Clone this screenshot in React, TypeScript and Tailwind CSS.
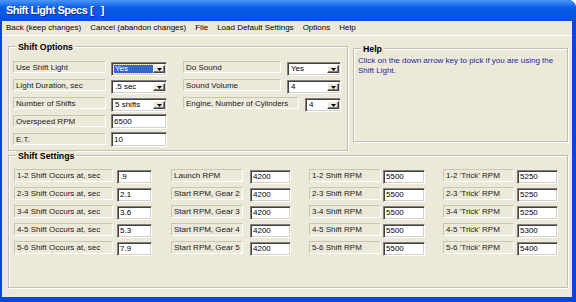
import React from 'react';

const sunken =
  'bg-white border border-[#808080] border-r-white border-b-white shadow-[inset_1px_1px_0_#404040,inset_-1px_-1px_0_#d4d0c8]';
const labelBox =
  'border border-[#c9c6b6] border-r-white border-b-white pl-[2px] leading-[11px] text-[#1a1a1a] whitespace-nowrap overflow-hidden';

function Label({ text, className }: { text: string; className: string }) {
  return <div className={`${labelBox} ${className}`}>{text}</div>;
}

function Input({ value, className }: { value: string; className: string }) {
  return (
    <div className={`${sunken} ${className} pl-[2px] flex items-center text-black`}>
      {value}
    </div>
  );
}

function Combo({
  value,
  className,
  selected = false,
}: {
  value: string;
  className: string;
  selected?: boolean;
}) {
  return (
    <div className={`${sunken} ${className} flex items-stretch p-[2px] pr-[1px]`}>
      <div className="flex-1 flex items-stretch">
        {selected ? (
          <span className="flex-1 flex items-center pl-[1px] bg-[#316ac5] text-white outline outline-1 outline-dotted outline-[#f0c060]">
            {value}
          </span>
        ) : (
          <span className="flex-1 flex items-center pl-[1px] text-black">{value}</span>
        )}
      </div>
      <div className="w-[12px] bg-[#ece9d8] border border-white border-r-[#404040] border-b-[#404040] shadow-[inset_-1px_-1px_0_#808080] flex items-center justify-center">
        <svg width="5" height="3" viewBox="0 0 5 3">
          <path d="M0 0h5L2.5 3z" fill="#000" />
        </svg>
      </div>
    </div>
  );
}

function Group({
  title,
  className,
  children,
}: {
  title: string;
  className: string;
  children: React.ReactNode;
}) {
  return (
    <div
      className={`relative border border-[#c2bfb0] shadow-[inset_1px_1px_0_#fff,1px_1px_0_#fff] ${className}`}
    >
      <span className="absolute left-[7px] top-[-5px] bg-[#ece9d8] px-[2px] font-bold text-[8.75px] leading-[11px] text-black">
        {title}
      </span>
      {children}
    </div>
  );
}

const shiftRows = [
  ['1-2 Shift Occurs at, sec', '.9', 'Launch RPM', '4200', '1-2 Shift RPM', '5500', "1-2 'Trick' RPM", '5250'],
  ['2-3 Shift Occurs at, sec', '2.1', 'Start RPM, Gear 2', '4200', '2-3 Shift RPM', '5500', "2-3 'Trick' RPM", '5250'],
  ['3-4 Shift Occurs at, sec', '3.6', 'Start RPM, Gear 3', '4200', '3-4 Shift RPM', '5500', "3-4 'Trick' RPM", '5250'],
  ['4-5 Shift Occurs at, sec', '5.3', 'Start RPM, Gear 4', '4200', '4-5 Shift RPM', '5500', "4-5 'Trick' RPM", '5300'],
  ['5-6 Shift Occurs at, sec', '7.9', 'Start RPM, Gear 5', '4200', '5-6 Shift RPM', '5500', "5-6 'Trick' RPM", '5400'],
];

export default function App() {
  return (
    <div className="w-[576px] h-[302px] bg-white font-['Liberation_Sans',Arial,sans-serif] text-[8px]">
      <div className="w-full h-full flex flex-col bg-[#0b47d6] rounded-tr-[8px] overflow-hidden">
        {/* title bar */}
        <div className="h-[21px] shrink-0 flex items-center pl-[6px] bg-linear-to-b from-[#4a96f8] via-[#0b5ee8] via-35% to-[#0652dc]">
          <span className="text-white font-bold text-[11px] tracking-[-0.5px] whitespace-pre [text-shadow:1px_1px_0_#0a2f9a]">
            Shift Light Specs [   ]
          </span>
        </div>

        <div className="flex-1 ml-[2px] mr-[4px] mb-[5px] bg-[#ece9d8] flex flex-col">
          {/* menu */}
          <div className="h-[15px] shrink-0 flex items-center gap-[9px] pl-[4px] border-b border-white text-[8px] text-black">
            <span>Back (keep changes)</span>
            <span>Cancel (abandon changes)</span>
            <span>File</span>
            <span>Load Default Settings</span>
            <span>Options</span>
            <span>Help</span>
          </div>

          <div className="flex pl-[6px] mt-[10px]">
            <Group title="Shift Options" className="w-[340px] h-[105px] pt-[14px] pl-[4px]">
              <div className="flex">
                <div className="flex flex-col">
                  <div className="h-[18px] flex items-start">
                    <Label text="Use Shift Light" className="w-[93px] h-[12px]" />
                    <Combo value="Yes" selected className="ml-[5px] mt-[1px] w-[56px] h-[14px]" />
                  </div>
                  <div className="h-[18px] flex items-start">
                    <Label text="Light Duration, sec" className="w-[93px] h-[12px]" />
                    <Combo value=".5 sec" className="ml-[5px] mt-[1px] w-[56px] h-[14px]" />
                  </div>
                  <div className="h-[18px] flex items-start">
                    <Label text="Number of Shifts" className="w-[93px] h-[12px]" />
                    <Combo value="5 shifts" className="ml-[5px] mt-[1px] w-[56px] h-[14px]" />
                  </div>
                  <div className="h-[18px] flex items-start">
                    <Label text="Overspeed RPM" className="w-[93px] h-[12px]" />
                    <Input value="6500" className="ml-[5px] mt-[-1px] w-[56px] h-[15px]" />
                  </div>
                  <div className="h-[18px] flex items-start">
                    <Label text="E.T." className="w-[93px] h-[12px]" />
                    <Input value="10" className="ml-[5px] mt-[-1px] w-[56px] h-[15px]" />
                  </div>
                </div>
                <div className="flex flex-col ml-[16px]">
                  <div className="h-[18px] flex items-start">
                    <Label text="Do Sound" className="w-[98px] h-[12px]" />
                    <Combo value="Yes" className="ml-[6px] mt-[1px] w-[54px] h-[14px]" />
                  </div>
                  <div className="h-[18px] flex items-start">
                    <Label text="Sound Volume" className="w-[98px] h-[12px]" />
                    <Combo value="4" className="ml-[6px] mt-[1px] w-[54px] h-[14px]" />
                  </div>
                  <div className="h-[18px] flex items-start">
                    <Label text="Engine, Number of Cylinders" className="w-[116px] h-[12px]" />
                    <Combo value="4" className="ml-[6px] mt-[1px] w-[36px] h-[14px]" />
                  </div>
                </div>
              </div>
            </Group>

            <Group title="Help" className="ml-[5px] mt-[2px] w-[215px] h-[94px] pt-[7px] pl-[4px]">
              <p className="text-[#1f1f9e] leading-[9.5px] whitespace-nowrap">
                Click on the down arrow key to pick if you are using the
                <br />
                Shift Light.
              </p>
            </Group>
          </div>

          <Group title="Shift Settings" className="ml-[6px] mt-[4px] w-[560px] h-[133px] pt-[13px] pl-[5px]">
            <div className="flex flex-col">
              {shiftRows.map((r) => (
                <div key={r[0]} className="h-[18px] flex items-start">
                  <Label text={r[0]} className="w-[99px] h-[13px]" />
                  <Input value={r[1]} className="ml-[4px] mt-[1px] w-[35px] h-[14px]" />
                  <Label text={r[2]} className="ml-[19px] w-[72px] h-[13px]" />
                  <Input value={r[3]} className="ml-[7px] mt-[1px] w-[41px] h-[14px]" />
                  <Label text={r[4]} className="ml-[18px] w-[72px] h-[13px]" />
                  <Input value={r[5]} className="ml-[2px] mt-[1px] w-[42px] h-[14px]" />
                  <Label text={r[6]} className="ml-[18px] w-[71px] h-[13px]" />
                  <Input value={r[7]} className="ml-[3px] mt-[1px] w-[41px] h-[14px]" />
                </div>
              ))}
            </div>
          </Group>
        </div>
      </div>
    </div>
  );
}
